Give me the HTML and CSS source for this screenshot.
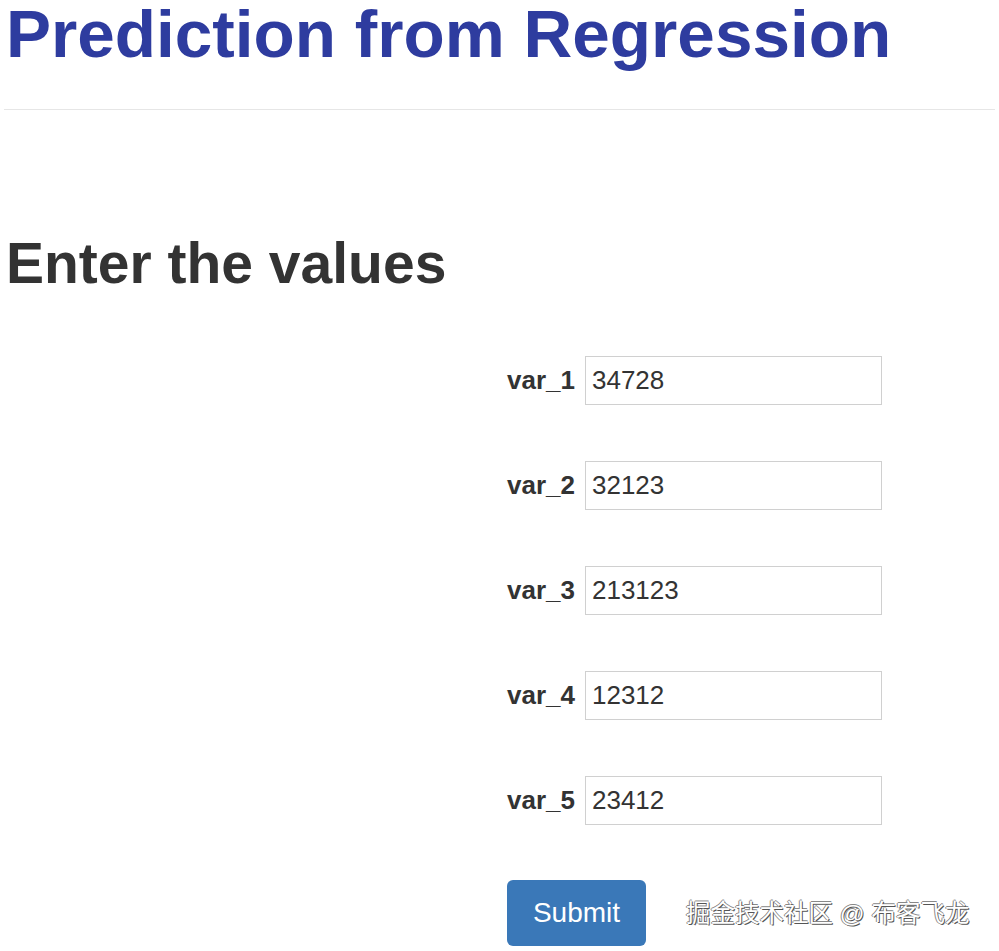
FILE: index.html
```html
<!DOCTYPE html>
<html lang="en">
<head>
    <meta charset="UTF-8">
    <meta name="viewport" content="width=device-width, initial-scale=1.0">
    <title>Prediction from Regression</title>
    <link rel="stylesheet" href="styles.css">
</head>
<body>
    <div class="page">
        <header class="page-header">
            <h1>Prediction from Regression</h1>
        </header>
        <h2 class="form-title">Enter the values</h2>
        <form class="values-form" onsubmit="return false">
            <div class="form-row">
                <label for="var_1">var_1</label>
                <input type="text" id="var_1" value="34728">
            </div>
            <div class="form-row">
                <label for="var_2">var_2</label>
                <input type="text" id="var_2" value="32123">
            </div>
            <div class="form-row">
                <label for="var_3">var_3</label>
                <input type="text" id="var_3" value="213123">
            </div>
            <div class="form-row">
                <label for="var_4">var_4</label>
                <input type="text" id="var_4" value="12312">
            </div>
            <div class="form-row">
                <label for="var_5">var_5</label>
                <input type="text" id="var_5" value="23412">
            </div>
            <button type="submit" class="submit-btn">Submit</button>
        </form>
    </div>
    <div class="watermark">掘金技术社区 @ 布客飞龙</div>
</body>
</html>
```

FILE: styles.css
```css
body {
    font-family: "Liberation Sans", Arial, sans-serif;
    margin: 0;
    padding: 0;
    background-color: #fff;
    color: #333;
    overflow: hidden;
}

.page {
    padding: 0 4px;
}

.page-header {
    border-bottom: 1px solid #e6e6e6;
    padding-bottom: 41px;
}

.page-header h1 {
    margin: 0;
    padding: 0 2px;
    font-size: 67.5px;
    line-height: 68px;
    font-weight: bold;
    color: #2e3c9f;
}

.form-title {
    margin: 121px 0 0 2px;
    font-size: 57px;
    line-height: 64px;
    font-weight: bold;
    color: #333;
}

.values-form {
    margin: 61px 0 0 503px;
    display: flex;
    flex-direction: column;
    align-items: flex-start;
    gap: 56px;
}

.form-row {
    display: flex;
    align-items: center;
    gap: 10px;
}

.form-row label {
    font-size: 26px;
    font-weight: bold;
    color: #333;
}

.form-row input {
    width: 297px;
    height: 49px;
    box-sizing: border-box;
    padding: 0 6px;
    border: 1px solid #d0d0d0;
    font-family: "Liberation Sans", Arial, sans-serif;
    font-size: 26px;
    color: #333;
    outline: none;
}

.submit-btn {
    width: 139px;
    height: 66px;
    margin-top: -1px;
    background-color: #3a78b8;
    color: #fff;
    border: none;
    border-radius: 6px;
    font-family: "Liberation Sans", Arial, sans-serif;
    font-size: 28px;
    cursor: pointer;
}

.watermark {
    position: absolute;
    left: 686px;
    top: 894px;
    font-family: "Liberation Sans", "Noto Sans CJK SC", sans-serif;
    font-size: 24.5px;
    color: #fff;
    text-shadow: 1px 1px 0 #555, -1px 0 0 #888, 0 -1px 0 #888;
}
```
